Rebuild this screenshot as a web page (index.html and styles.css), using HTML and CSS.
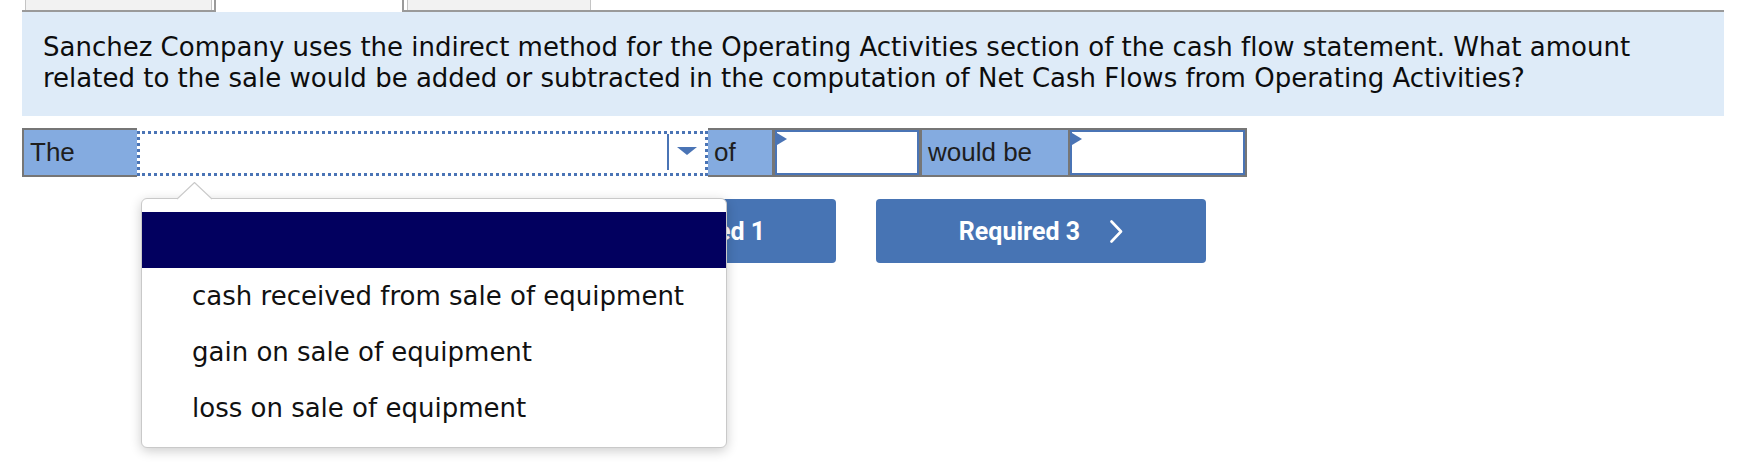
FILE: index.html
```html
<!DOCTYPE html>
<html lang="en">
<head>
<meta charset="utf-8">
<title>Cash flow question</title>
<link rel="stylesheet" href="styles.css">
</head>
<body>
<div class="page">
  <div class="tabs">
    <div class="tab"></div>
    <div class="tab active"></div>
    <div class="tab narrow"></div>
  </div>
  <div class="question">Sanchez Company uses the indirect method for the Operating Activities section of the cash flow statement. What amount related to the sale would be added or subtracted in the computation of Net Cash Flows from Operating Activities?</div>
  <div class="answer-row">
    <div class="cell label the">The</div>
    <div class="select-wrap">
      <div class="select">
        <div class="select-value"></div>
        <div class="select-btn">
          <svg class="arrow" width="20" height="8" viewBox="0 0 20 8"><polygon points="0,0 20,0 10,8" fill="#4a74b5"/></svg>
        </div>
      </div>
      <div class="popup">
        <svg class="caret" width="35" height="18" viewBox="0 0 35 18"><polygon points="0,17 17.5,0.5 35,17 35,18 0,18" fill="#fff"/><polyline points="0,17 17.5,0.5 35,17" fill="none" stroke="#c9c9c9" stroke-width="1.2"/></svg>
        <div class="opt selected"></div>
        <div class="opt">cash received from sale of equipment</div>
        <div class="opt">gain on sale of equipment</div>
        <div class="opt">loss on sale of equipment</div>
      </div>
    </div>
    <div class="cell label of">of</div>
    <div class="input in1"><span class="flag"></span></div>
    <div class="cell label would">would be</div>
    <div class="input in2"><span class="flag"></span></div>
  </div>
  <div class="nav">
    <button class="navbtn prev">
      <svg class="chev" width="13" height="23" viewBox="0 0 13 23"><polyline points="11.5,1.5 2,11.5 11.5,21.5" fill="none" stroke="#fff" stroke-width="2.6" stroke-linecap="round" stroke-linejoin="round"/></svg>
      <span>Required 1</span>
    </button>
    <button class="navbtn">
      <span>Required 3</span>
      <svg class="chev" width="13" height="23" viewBox="0 0 13 23"><polyline points="1.5,1.5 11,11.5 1.5,21.5" fill="none" stroke="#fff" stroke-width="2.6" stroke-linecap="round" stroke-linejoin="round"/></svg>
    </button>
  </div>
</div>
</body>
</html>
```
FILE: styles.css
```css
html, body {
  margin: 0;
  padding: 0;
  background: #fff;
  font-variant-ligatures: none;
}

.page {
  width: 1744px;
  height: 473px;
  overflow: hidden;
  position: relative;
}

/* top tab strip (cut off) */
.tabs {
  display: flex;
  margin-left: 22px;
  width: 1702px;
  height: 10px;
  border-bottom: 2px solid #9a9a9a;
}
.tab {
  margin-left: 3px;
  width: 185px;
  height: 10px;
  background: #f2f2f2;
  border-left: 1px solid #c4c4c4;
  border-right: 1px solid #c4c4c4;
}
.tab.active {
  margin-left: 2px;
  width: 186px;
  height: 12px;
  margin-bottom: -2px;
  background: #fff;
  border-left: 2px solid #9a9a9a;
  border-right: 2px solid #9a9a9a;
}
.tab.narrow {
  width: 182px;
}

/* question panel */
.question {
  margin-left: 22px;
  width: 1702px;
  height: 104px;
  box-sizing: border-box;
  padding: 20px 30px 0 21px;
  background: #deebf8;
  font-family: "DejaVu Sans", Verdana, sans-serif;
  font-size: 26px;
  line-height: 31px;
  color: #0d0d0d;
}

/* answer row */
.answer-row {
  display: flex;
  margin: 12px 0 0 22px;
  width: max-content;
  height: 45px;
  border: 2px solid #767676;
  background: #767676;
  font-family: "Liberation Sans", Arial, sans-serif;
  font-size: 26px;
  color: #1e1e1e;
}
.cell.label {
  background: #84abe0;
  line-height: 45px;
  padding-left: 6px;
  box-sizing: border-box;
}
.the { width: 113px; padding-left: 7px; }
.of { width: 64px; }
.would { width: 146px; margin-left: 3px; }

.select-wrap {
  position: relative;
  width: 571px;
  margin: -2px 0;
  padding: 3px 0 1px;
  box-sizing: border-box;
  background: #fff;
}
.select {
  display: flex;
  height: 100%;
  box-sizing: border-box;
  border: 3px dotted #4a74b5;
}
.select-value { flex: 1; }
.select-btn {
  width: 36px;
  margin-bottom: 3px;
  border-left: 2px solid #4a74b5;
  display: flex;
  align-items: center;
  justify-content: center;
}
.arrow { display: block; margin-top: -2px; }

.input {
  position: relative;
  margin-left: 3px;
  background: #fff;
  border: 2px solid #4a74b5;
  box-sizing: border-box;
}
.in1 { width: 144px; }
.in2 { width: 175px; margin-left: 2px; }
.flag {
  position: absolute;
  left: 0;
  top: 1px;
  width: 0;
  height: 0;
  border-left: 10px solid #4a74b5;
  border-top: 6px solid transparent;
  border-bottom: 6px solid transparent;
}

/* dropdown popup */
.popup {
  position: absolute;
  left: 4px;
  top: 70px;
  z-index: 5;
  width: 586px;
  box-sizing: border-box;
  padding: 13px 0 11px;
  background: #fff;
  border: 1px solid #c9c9c9;
  border-radius: 6px;
  box-shadow: 0 3px 12px rgba(0, 0, 0, 0.2);
  font-family: "DejaVu Sans", Verdana, sans-serif;
  font-size: 26px;
  color: #111;
}
.caret {
  position: absolute;
  left: 35px;
  top: -17px;
  display: block;
}
.opt {
  height: 56px;
  line-height: 56px;
  padding-left: 50px;
  white-space: nowrap;
}
.opt.selected {
  background: #02005f;
}

/* navigation buttons */
.nav {
  display: flex;
  gap: 40px;
  margin: 22px 0 0 506px;
}
.navbtn {
  width: 330px;
  height: 64px;
  box-sizing: border-box;
  border: none;
  border-radius: 4px;
  background: #4774b4;
  color: #fff;
  font-family: Roboto, "Liberation Sans", sans-serif;
  font-weight: 700;
  font-size: 25px;
  display: flex;
  align-items: center;
  justify-content: center;
  gap: 30px;
  padding: 0;
}
.navbtn.prev {
  padding-left: 24px;
}
.chev { display: block; }
```
